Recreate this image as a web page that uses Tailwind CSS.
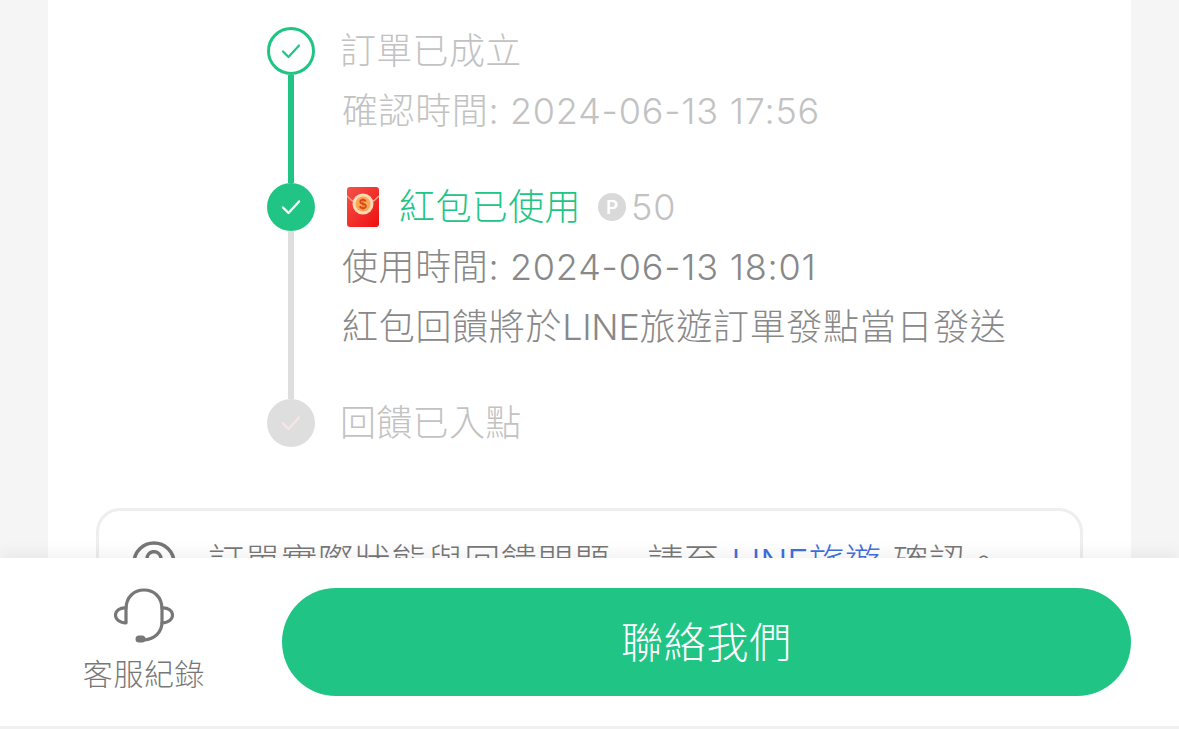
<!DOCTYPE html>
<html lang="zh-Hant">
<head>
<meta charset="utf-8">
<script src="https://cdn.jsdelivr.net/npm/@tailwindcss/browser@4"></script>
</head>
<body class="m-0">
<div class="relative h-[729px] w-[1179px] overflow-hidden bg-[#f5f5f5] font-['Inter','Noto_Sans_CJK_TC',sans-serif] font-light">
  <main class="mx-[48px] h-full w-[1083px] bg-white pt-[27px]">
    <ol class="ml-[219px]">
      <li class="flex h-[156px] gap-[26px]">
        <div class="flex w-[48px] shrink-0 flex-col items-center">
          <span class="flex size-[48px] shrink-0 items-center justify-center rounded-full border-[3px] border-[#20c586] bg-white">
            <svg class="size-[22px]" viewBox="0 0 22 22" fill="none" stroke="#20c586" stroke-width="2.2" stroke-linecap="round" stroke-linejoin="round"><path d="M3 11.500l5.500 5.500L19 5.500"/></svg>
          </span>
          <span class="w-[6px] grow bg-[#20c586]"></span>
        </div>
        <div class="-ml-[1px] pt-[1px]">
          <p class="text-[36px] leading-[46px] tracking-[0.3px] text-[#c2c2c2]">訂單已成立</p>
          <p class="mt-[14px] ml-[2px] text-[36px] leading-[46px] tracking-[0.6px] text-[#c2c2c2]">確認時間: <span class="tracking-[0.8px]">2024-06-13 17:56</span></p>
        </div>
      </li>
      <li class="flex h-[216px] gap-[26px]">
        <div class="flex w-[48px] shrink-0 flex-col items-center">
          <span class="flex size-[48px] shrink-0 items-center justify-center rounded-full bg-[#20c586]">
            <svg class="size-[22px]" viewBox="0 0 22 22" fill="none" stroke="#fff" stroke-width="2.4" stroke-linecap="round" stroke-linejoin="round"><path d="M3 11.500l5.500 5.500L19 5.500"/></svg>
          </span>
          <span class="w-[6px] grow bg-[#dedede]"></span>
        </div>
        <div class="pt-[1px]">
          <div class="flex h-[46px] items-center">
            <svg class="ml-[6px] h-[40px] w-[32px]" viewBox="0 0 32 40">
              <defs>
                <linearGradient id="env" x1="0" y1="0" x2="1" y2="1"><stop offset="0" stop-color="#f4534a"/><stop offset="1" stop-color="#ee0f0f"/></linearGradient>
              </defs>
              <rect width="32" height="40" rx="3" fill="url(#env)"/>
              <path d="M0 9 Q16 27 32 9" fill="none" stroke="#f7a58c" stroke-width="1.500"/>
              <circle cx="16" cy="17" r="10.500" fill="#fbd9b5"/>
              <circle cx="16" cy="17" r="7.500" fill="#f7a850"/>
              <text x="16" y="22" text-anchor="middle" font-size="14" font-weight="700" fill="#d9431e" font-family="Liberation Sans">$</text>
            </svg>
            <span class="ml-[20px] text-[36px] leading-[46px] tracking-[0.4px] text-[#20c586]">紅包已使用</span>
            <span class="ml-[17px] flex size-[28px] items-center justify-center rounded-full bg-[#d9d9d9] text-[19px] font-semibold leading-none text-white">P</span>
            <span class="ml-[5px] text-[36px] leading-[46px] tracking-[0.8px] text-[#c2c2c2]">50</span>
          </div>
          <p class="mt-[14px] ml-[1px] text-[36px] leading-[46px] tracking-[0.6px] text-[#888888]">使用時間: <span class="tracking-[0.8px]">2024-06-13 18:01</span></p>
          <p class="mt-[14px] ml-[1px] text-[36px] leading-[46px] tracking-[0.7px] text-[#888888]">紅包回饋將於<span class="tracking-[-0.3px]">LINE</span>旅遊訂單發點當日發送</p>
        </div>
      </li>
      <li class="flex h-[48px] gap-[26px]">
        <span class="flex size-[48px] shrink-0 items-center justify-center rounded-full bg-[#dedede]">
          <svg class="size-[22px]" viewBox="0 0 22 22" fill="none" stroke="#fbe3e6" stroke-width="2.2" stroke-linecap="round" stroke-linejoin="round"><path d="M3 11.500l5.500 5.500L19 5.500"/></svg>
        </span>
        <p class="-ml-[1px] pt-[1px] text-[36px] leading-[46px] tracking-[0.3px] text-[#c2c2c2]">回饋已入點</p>
      </li>
    </ol>
    <aside class="mx-[48px] mt-[61px] flex h-[120px] items-start gap-[32px] rounded-[24px] border-[3px] border-[#eeeeee] pl-[33px] pt-[30px]">
      <svg class="size-[44px] shrink-0" viewBox="0 0 44 44" fill="none" stroke="#777" stroke-width="3.500"><circle cx="22" cy="22" r="20"/><path d="M15 18a7 7 0 1 1 10 6c-2 1.200-3 2.500-3 5"/></svg>
      <p class="-mt-[5px] text-[36px] leading-[46px] tracking-[0.6px] text-[#777]">訂單實際狀態與回饋問題<span lang="zh-Hans" class="font-['Noto_Sans_CJK_SC',sans-serif]">，</span>請至 <span class="text-[#3f6fe0]"><span class="tracking-[-0.3px]">LINE</span>旅遊</span> 確認。</p>
    </aside>
  </main>
  <footer class="absolute inset-x-0 top-[558px] flex h-[168px] items-start bg-white px-[48px] pt-[30px] shadow-[0_-6px_14px_rgba(0,0,0,0.05)]">
    <button class="flex w-[192px] shrink-0 flex-col items-center">
      <svg class="h-[58px] w-[60px]" viewBox="0 0 60 58" fill="none" stroke="#777" stroke-width="3.200" stroke-linecap="round">
        <path d="M12 34V21C12 9 20 2 30 2s18 7 18 19v13c0 10-7 17-18 18"/>
        <path d="M12 20c-13-1-15 14 0 15" />
        <path d="M48 20c13-1 15 14 0 15" />
        <path d="M28 51h-3" stroke-width="7"/>
      </svg>
      <span class="mt-[9px] text-[30px] leading-[38px] tracking-[0.6px] text-[#777]">客服紀錄</span>
    </button>
    <button class="ml-[42px] flex h-[108px] w-[849px] items-center justify-center rounded-full bg-[#20c586] text-[42px] tracking-[0.8px] text-white">聯絡我們</button>
  </footer>
  <div class="absolute inset-x-0 bottom-0 h-[3px] bg-[#f0f0f0]"></div>
</div>
</body>
</html>
